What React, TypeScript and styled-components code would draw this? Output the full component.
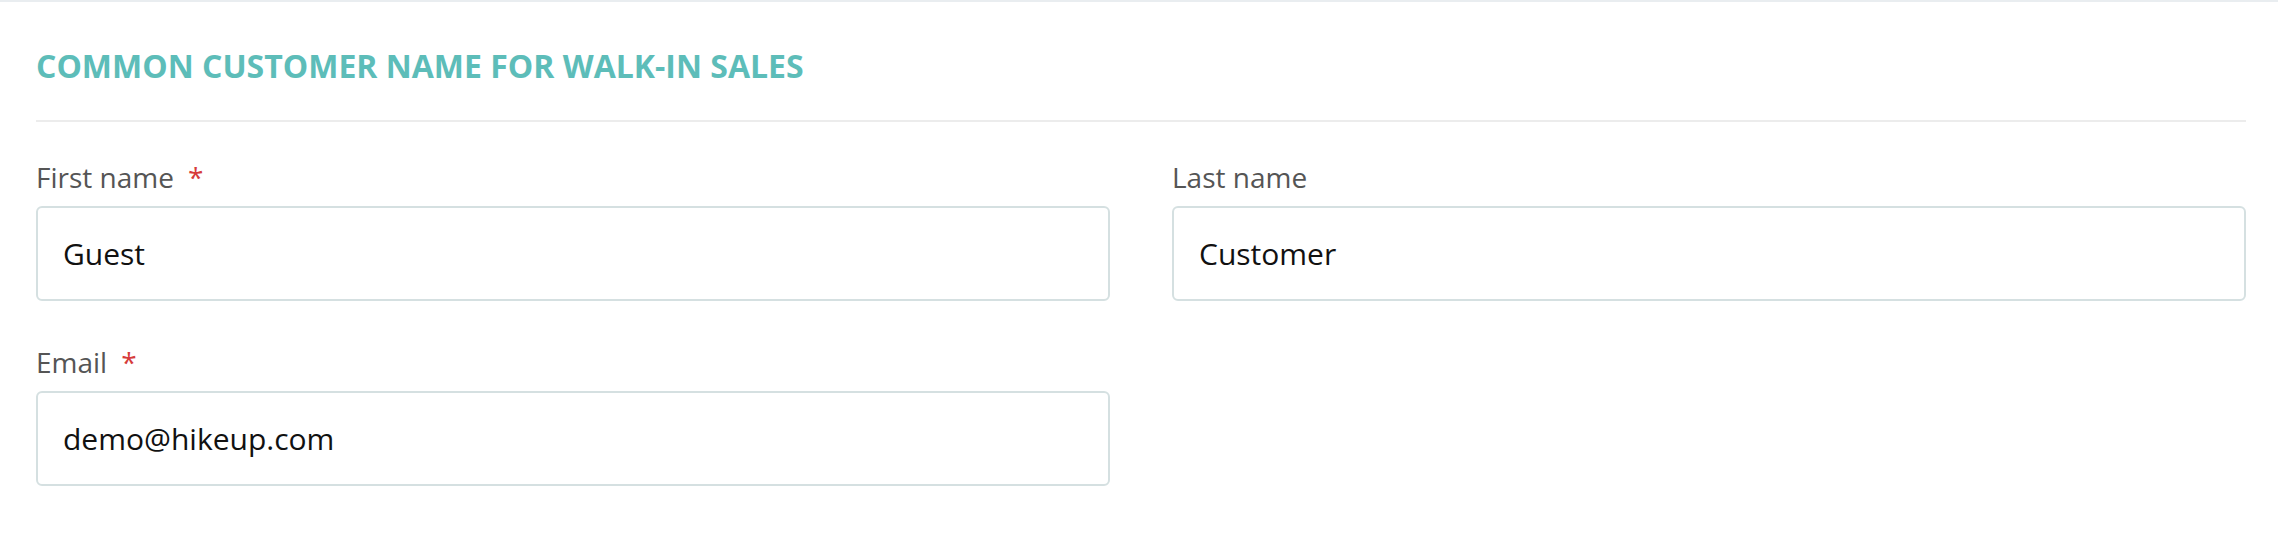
import React from 'react';
import styled, { createGlobalStyle } from 'styled-components';

const GlobalStyle = createGlobalStyle`
  html, body {
    margin: 0;
    padding: 0;
    background: #ffffff;
  }
  body {
    font-family: 'Open Sans', 'Noto Sans', Arial, sans-serif;
  }
  * {
    box-sizing: border-box;
  }
`;

const Card = styled.section`
  background: #ffffff;
  border-top: 2px solid #e9edf0;
  padding: 0 32px 40px 36px;
`;

const Header = styled.div`
  padding: 42px 0 32px;
  border-bottom: 2px solid #ececec;
`;

const Title = styled.h2`
  margin: 0;
  font-size: 32px;
  line-height: 44px;
  font-weight: 700;
  color: #5dbdb9;
  text-transform: uppercase;
`;

const FormGrid = styled.div`
  display: grid;
  grid-template-columns: 1fr 1fr;
  column-gap: 62px;
  row-gap: 42px;
  padding-top: 36px;
`;

const Field = styled.div`
  display: flex;
  flex-direction: column;
`;

const Label = styled.label`
  font-size: 28px;
  line-height: 38px;
  color: #555555;
  margin-bottom: 10px;
`;

const Required = styled.span`
  color: #d63b3b;
  margin-left: 14px;
`;

const TextInput = styled.input`
  height: 95px;
  width: 100%;
  padding: 0 25px;
  border: 2px solid #d5e0e1;
  border-radius: 6px;
  font-family: 'Open Sans', 'Noto Sans', Arial, sans-serif;
  font-size: 30px;
  color: #111111;
  background: #ffffff;
  outline: none;
`;

interface FieldProps {
  label: string;
  value: string;
  required?: boolean;
}

const FormField: React.FC<FieldProps> = ({ label, value, required }) => (
  <Field>
    <Label>
      {label}
      {required && <Required>*</Required>}
    </Label>
    <TextInput type="text" value={value} readOnly />
  </Field>
);

const App: React.FC = () => {
  return (
    <>
      <GlobalStyle />
      <Card>
        <Header>
          <Title>Common customer name for walk-in sales</Title>
        </Header>
        <FormGrid>
          <FormField label="First name" value="Guest" required />
          <FormField label="Last name" value="Customer" />
          <FormField label="Email" value="demo@hikeup.com" required />
        </FormGrid>
      </Card>
    </>
  );
};

export default App;
